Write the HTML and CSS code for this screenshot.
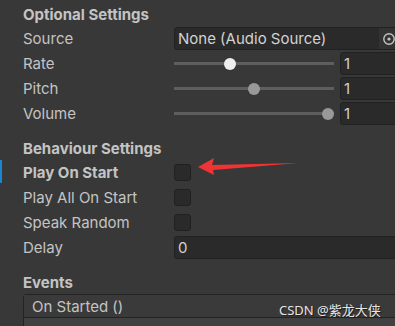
FILE: index.html
```html
<!DOCTYPE html>
<html lang="en">
<head>
    <meta charset="UTF-8">
    <meta name="viewport" content="width=device-width, initial-scale=1.0">
    <title>Speech Inspector</title>
    <link rel="stylesheet" href="styles.css">
</head>
<body>
    <div class="inspector">
        <div class="section">
            <div class="section-title">Optional Settings</div>
            <div class="row">
                <span class="label">Source</span>
                <div class="value">
                    <div class="field object-field">
                        <span class="field-text">None (Audio Source)</span>
                        <span class="picker">
                            <svg width="14" height="14" viewBox="0 0 14 14">
                                <circle cx="7" cy="7" r="5.2" fill="none" stroke="#c4c4c4" stroke-width="1.4"/>
                                <circle cx="7" cy="7" r="1.6" fill="#c4c4c4"/>
                            </svg>
                        </span>
                    </div>
                </div>
            </div>
            <div class="row">
                <span class="label">Rate</span>
                <div class="value slider">
                    <div class="track"><span class="thumb active" style="left: 35%"></span></div>
                    <div class="field number-field">1</div>
                </div>
            </div>
            <div class="row">
                <span class="label">Pitch</span>
                <div class="value slider">
                    <div class="track"><span class="thumb" style="left: 50%"></span></div>
                    <div class="field number-field">1</div>
                </div>
            </div>
            <div class="row">
                <span class="label">Volume</span>
                <div class="value slider">
                    <div class="track"><span class="thumb" style="left: 96.5%"></span></div>
                    <div class="field number-field">1</div>
                </div>
            </div>
        </div>

        <div class="section">
            <div class="section-title">Behaviour Settings</div>
            <div class="row overridden">
                <span class="label">Play On Start</span>
                <div class="value"><span class="checkbox"></span></div>
            </div>
            <div class="row">
                <span class="label">Play All On Start</span>
                <div class="value"><span class="checkbox"></span></div>
            </div>
            <div class="row">
                <span class="label">Speak Random</span>
                <div class="value"><span class="checkbox"></span></div>
            </div>
            <div class="row">
                <span class="label">Delay</span>
                <div class="value">
                    <div class="field">0</div>
                </div>
            </div>
        </div>

        <div class="section">
            <div class="section-title">Events</div>
            <div class="event-box">
                <div class="event-header">On Started ()</div>
                <div class="event-body"></div>
            </div>
        </div>
    </div>

    <svg class="arrow" width="110" height="24" viewBox="0 0 110 24">
        <polygon points="0,10 16,1 14,8 101,6 15,13 16,18" fill="#f03434"/>
    </svg>

    <div class="watermark">CSDN @紫龙大侠</div>
</body>
</html>
```

FILE: styles.css
```css
* {
    margin: 0;
    padding: 0;
    box-sizing: border-box;
}

body {
    background: #383838;
    font-family: Inter, "Noto Sans", "Noto Sans CJK SC", sans-serif;
    font-size: 15px;
    color: #c4c4c4;
    overflow: hidden;
    position: relative;
    height: 326px;
}

.inspector {
    width: 430px;
    padding: 4px 0 0 23px;
}

.section + .section {
    margin-top: 12px;
}

.section-title {
    height: 22px;
    line-height: 22px;
    font-weight: 700;
}

.row {
    display: flex;
    align-items: center;
    height: 25px;
    position: relative;
}

.row.overridden .label {
    font-weight: 700;
}

.row.overridden::before {
    content: "";
    position: absolute;
    left: -23px;
    top: 0;
    width: 2px;
    height: 23px;
    background: #1c84d1;
}

.label {
    width: 151px;
    flex-shrink: 0;
}

.value {
    flex: 1;
    display: flex;
    align-items: center;
}

.field {
    flex: 1;
    height: 23px;
    line-height: 21px;
    background: #2a2a2a;
    border: 1px solid #212121;
    border-radius: 3px;
    padding: 0 3px;
    color: #d2d2d2;
    overflow: hidden;
    white-space: nowrap;
}

.object-field {
    display: flex;
    padding-right: 0;
}

.field-text {
    flex: 1;
}

.picker {
    width: 50px;
    background: #333333;
    display: flex;
    align-items: center;
    padding-left: 3px;
}

.slider {
    gap: 6px;
}

.track {
    flex: 1;
    height: 3px;
    background: #5e5e5e;
    position: relative;
}

.thumb {
    position: absolute;
    top: 50%;
    width: 12px;
    height: 12px;
    margin: -6px 0 0 -6px;
    border-radius: 50%;
    background: #999999;
}

.thumb.active {
    background: #eeeeee;
}

.number-field {
    flex: 0 0 90px;
}

.checkbox {
    width: 17px;
    height: 17px;
    background: #2a2a2a;
    border: 1px solid #202020;
    border-radius: 3px;
}

.event-box {
    border: 1px solid #232323;
    border-radius: 3px;
    width: 420px;
}

.event-header {
    height: 23px;
    line-height: 23px;
    padding-left: 8px;
    background: #3a3a3a;
    border-bottom: 1px solid #232323;
}

.event-body {
    height: 20px;
    background: #414141;
}

.arrow {
    position: absolute;
    left: 198px;
    top: 157px;
}

.watermark {
    position: absolute;
    left: 279px;
    top: 300px;
    font-family: "Noto Sans", "Noto Sans CJK SC", sans-serif;
    font-size: 13px;
    color: #e6e6e6;
    text-shadow: 1px 1px 1px #1a1a1a;
}
```
